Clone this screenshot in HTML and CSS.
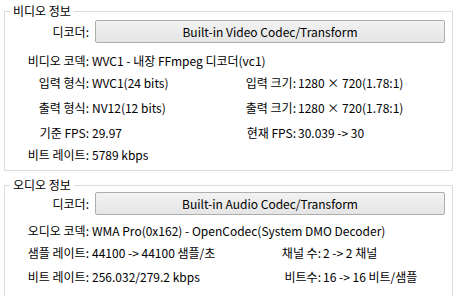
FILE: index.html
```html
<!DOCTYPE html>
<html>
<head>
  <meta charset="utf-8">
  <title>코덱 정보</title>
  <link rel="stylesheet" href="styles.css">
</head>
<body>
  <fieldset class="group video">
    <legend>비디오 정보</legend>
    <div class="row decoder">
      <span class="label">디코더:</span>
      <button>Built-in Video Codec/Transform</button>
    </div>
    <div class="row">
      <span class="label">비디오 코덱:</span>
      <span class="value">WVC1 - 내장 FFmpeg 디코더(vc1)</span>
    </div>
    <div class="row">
      <div class="cell"><span class="label">입력 형식:</span><span class="value">WVC1(24 bits)</span></div>
      <span class="label2">입력 크기:</span><span class="value">1280 × 720(1.78:1)</span>
    </div>
    <div class="row tall">
      <div class="cell"><span class="label">출력 형식:</span><span class="value">NV12(12 bits)</span></div>
      <span class="label2">출력 크기:</span><span class="value">1280 × 720(1.78:1)</span>
    </div>
    <div class="row">
      <div class="cell"><span class="label">기준 FPS:</span><span class="value">29.97</span></div>
      <span class="label2">현재 FPS:</span><span class="value">30.039 -&gt; 30</span>
    </div>
    <div class="row">
      <span class="label">비트 레이트:</span>
      <span class="value">5789 kbps</span>
    </div>
  </fieldset>

  <fieldset class="group audio">
    <legend>오디오 정보</legend>
    <div class="row decoder">
      <span class="label">디코더:</span>
      <button>Built-in Audio Codec/Transform</button>
    </div>
    <div class="row">
      <span class="label">오디오 코덱:</span>
      <span class="value">WMA Pro(0x162) - OpenCodec(System DMO Decoder)</span>
    </div>
    <div class="row">
      <div class="cell"><span class="label">샘플 레이트:</span><span class="value">44100 -&gt; 44100 샘플/초</span></div>
      <span class="label2">채널 수:</span><span class="value">2 -&gt; 2 채널</span>
    </div>
    <div class="row last">
      <div class="cell"><span class="label">비트 레이트:</span><span class="value">256.032/279.2 kbps</span></div>
      <span class="label2">비트수:</span><span class="value">16 -&gt; 16 비트/샘플</span>
    </div>
  </fieldset>
</body>
</html>
```

FILE: styles.css
```css
body {
  margin: 0;
  background-color: #fff;
  color: #000;
  font-family: "Noto Sans CJK KR", sans-serif;
  font-size: 12px;
  overflow: hidden;
}

.group {
  margin: 4px 0 0 4px;
  width: 449px;
  box-sizing: border-box;
  padding: 0 0 5px 0;
  border: 1px solid #dcdcdc;
}

.group legend {
  margin-left: 5px;
  padding: 0 3px;
  line-height: 14px;
}

.audio {
  margin-top: 7px;
  height: 140px;
}

.row {
  display: flex;
  align-items: center;
  height: 22px;
  white-space: nowrap;
}

.row.tall {
  height: 28px;
}

.row.last {
  height: 26px;
}

.row.decoder {
  height: 23px;
  margin-bottom: 6px;
}

.video .decoder {
  margin-top: 2px;
}

.audio .decoder {
  margin-bottom: 4px;
}

.cell {
  display: flex;
  width: 205px;
}

.label {
  width: 84px;
  flex: none;
  text-align: right;
  margin-right: 3px;
}

.label2 {
  text-align: right;
  margin-right: 2px;
  width: 86px;
}

.audio .label2 {
  width: 111px;
}

button {
  margin-left: 3px;
  width: 350px;
  height: 23px;
  padding: 0;
  font-family: inherit;
  font-size: 12px;
  color: #000;
  border: 1px solid #adadad;
  border-radius: 2px;
  background: linear-gradient(#f2f2f2, #e5e5e5);
}
```
